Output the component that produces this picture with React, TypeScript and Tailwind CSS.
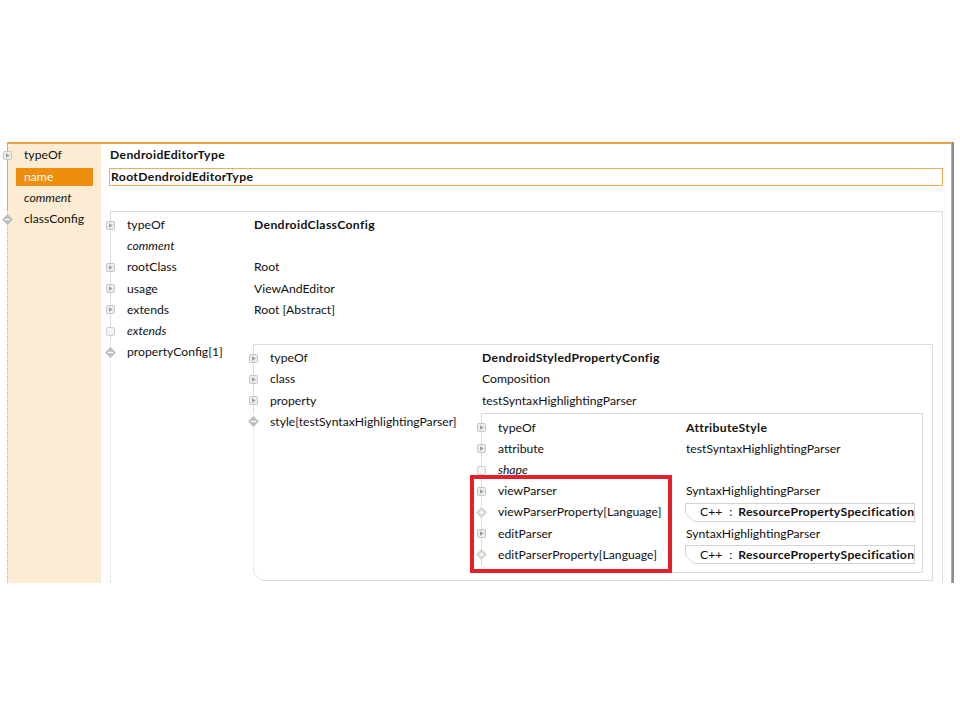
import React from 'react';

type IconKind = 'expand' | 'minus' | 'plus' | 'empty';

const ExpandIcon = () => (
  <svg width="9" height="9" viewBox="0 0 9 9">
    <rect x="0.5" y="0.5" width="8" height="8" rx="1" fill="#ececec" stroke="#c6c6c6" />
    <path d="M3 2.2 L6.6 4.5 L3 6.8 Z" fill="#9c9c9c" />
  </svg>
);

const EmptyIcon = () => (
  <svg width="9" height="9" viewBox="0 0 9 9">
    <rect x="0.5" y="0.5" width="8" height="8" rx="1.5" fill="#f4f4f4" stroke="#cfcfcf" />
  </svg>
);

const DiamondIcon = ({ plus }: { plus?: boolean }) => (
  <svg width="11" height="11" viewBox="0 0 11 11">
    <path d="M5.5 0 L11 5.5 L5.5 11 L0 5.5 Z" fill={plus ? '#d2d2d2' : '#bdbdbd'} />
    <path d="M2.8 5.5 H8.2" stroke="#f6f6f6" strokeWidth="1.4" />
    {plus && <path d="M5.5 2.8 V8.2" stroke="#f6f6f6" strokeWidth="1.4" />}
  </svg>
);

const Icon = ({ kind }: { kind: IconKind }) => {
  if (kind === 'expand') return <span className="absolute left-[-5px] top-[6px] leading-none"><ExpandIcon /></span>;
  if (kind === 'empty') return <span className="absolute left-[-5px] top-[6px] leading-none"><EmptyIcon /></span>;
  return (
    <span className="absolute left-[-6px] top-[5px] leading-none">
      <DiamondIcon plus={kind === 'plus'} />
    </span>
  );
};

interface RowProps {
  icon: IconKind;
  label: string;
  italic?: boolean;
  labelW: string;
  line: string;
  dotted?: boolean;
  labelBg?: string;
  gap?: string;
  selected?: boolean;
  children?: React.ReactNode;
}

const Row: React.FC<RowProps> = ({ icon, label, italic, labelW, line, dotted, labelBg = '', gap = '', selected, children }) => (
  <div className={`flex border-l ${dotted ? 'border-dotted' : 'border-solid'} ${line}`}>
    <div className={`relative shrink-0 ${labelW} ${labelBg}`}>
      <Icon kind={icon} />
      {selected ? (
        <div className="h-[21.2px] flex items-center pl-[8px]">
          <div className="h-[18px] w-[77px] bg-[#ef8d0e] text-white flex items-center pl-[8px]">{label}</div>
        </div>
      ) : (
        <div className={`h-[21.2px] flex items-center pl-[16px] whitespace-nowrap ${italic ? 'italic' : ''}`}>{label}</div>
      )}
    </div>
    <div className={`flex-1 min-w-0 ${gap}`}>{children}</div>
  </div>
);

const Val = ({ children, bold }: { children?: React.ReactNode; bold?: boolean }) => (
  <div className={`h-[21.2px] flex items-center pl-[1px] whitespace-nowrap ${bold ? 'font-bold tracking-[0.35px]' : ''}`}>{children}</div>
);

const SpecBox = () => (
  <div className="h-[21.2px] flex items-center">
    <div className="flex h-[19px] w-[230px]">
      <svg width="9" height="19" viewBox="0 0 9 19" className="shrink-0">
        <path d="M9 0.5 H0.5 V10 L9 18.5" fill="none" stroke="#d3d3d3" />
      </svg>
      <div className="flex-1 border-t border-r border-b border-[#d3d3d3] flex items-center pl-[6px] whitespace-nowrap">
        <span>C++</span>
        <span className="ml-[7px] mr-[6px]">:</span>
        <span className="font-bold tracking-[0.3px]">ResourcePropertySpecification</span>
      </div>
    </div>
  </div>
);

const BoxFooter = ({ h, line }: { h: string; line: string }) => (
  <div className={`flex ${h}`}>
    <svg width="9" height="8" viewBox="0 0 9 8" className="shrink-0 self-end">
      <path d="M0.5 0 L8.5 7.5 H9" fill="none" stroke="#e0e0e0" />
    </svg>
    <div className={`flex-1 border-b ${line}`} />
  </div>
);

const GRAY = 'border-[#dcdcdc]';
const ORANGE = 'border-[#f0a23a]';

export default function App() {
  return (
    <div className="relative h-[720px] w-[960px] bg-white overflow-hidden pt-[142px] text-[12.2px] text-[#111] font-['Lato',sans-serif]">
      <div className="h-[441px] overflow-hidden pl-[7px]">
        <div className="w-[945px] h-[441px] border-t-2 border-r border-[#f0a23a] shadow-[2px_0_0_#8e8e8e]">
          <div className={`h-[1px] border-l ${ORANGE} w-[94px] bg-[#fcecd3]`} />
          <Row icon="expand" label="typeOf" labelW="w-[93px]" labelBg="bg-[#fcecd3]" line={ORANGE} gap="ml-[8px] mr-[8px]">
            <Val bold>DendroidEditorType</Val>
          </Row>
          <Row icon="expand" label="name" selected labelW="w-[93px]" labelBg="bg-[#fcecd3] [&>span]:hidden" line={ORANGE} gap="ml-[8px] mr-[8px]">
            <div className="h-[21.2px] flex items-center">
              <div className="h-[18px] w-full border border-[#f3ab55] flex items-center pl-[1px] font-bold tracking-[0.35px]">RootDendroidEditorType</div>
            </div>
          </Row>
          <Row icon="empty" label="comment" italic labelW="w-[93px]" labelBg="bg-[#fcecd3] [&>span]:hidden" line={ORANGE} gap="ml-[8px] mr-[8px]" />
          <Row icon="minus" label="classConfig" dotted labelW="w-[93px]" labelBg="bg-[#fcecd3]" line={ORANGE} gap="ml-[8px] mr-[8px]">
            {/* classConfig */}
            <div className={`ml-[1px] mt-[2px] border-t border-r ${GRAY}`}>
              <div className={`h-[3px] border-l ${GRAY}`} />
              <Row icon="expand" label="typeOf" labelW="w-[142px]" line={GRAY}><Val bold>DendroidClassConfig</Val></Row>
              <Row icon="empty" label="comment" italic labelW="w-[142px] [&>span]:hidden" line={GRAY} />
              <Row icon="expand" label="rootClass" labelW="w-[142px]" line={GRAY}><Val>Root</Val></Row>
              <Row icon="expand" label="usage" labelW="w-[142px]" line={GRAY}><Val>ViewAndEditor</Val></Row>
              <Row icon="expand" label="extends" labelW="w-[142px]" line={GRAY}><Val>Root [Abstract]</Val></Row>
              <Row icon="empty" label="extends" italic labelW="w-[142px]" line={GRAY} />
              <Row icon="minus" label="propertyConfig[1]" dotted labelW="w-[142px]" line={GRAY} gap="pr-[9px]">
                {/* propertyConfig */}
                <div className={`mt-[2px] border-t border-r ${GRAY}`}>
                  <div className={`h-[3px] border-l ${GRAY}`} />
                  <Row icon="expand" label="typeOf" labelW="w-[227px]" line={GRAY}><Val bold>DendroidStyledPropertyConfig</Val></Row>
                  <Row icon="expand" label="class" labelW="w-[227px]" line={GRAY}><Val>Composition</Val></Row>
                  <Row icon="expand" label="property" labelW="w-[227px]" line={GRAY}><Val>testSyntaxHighlightingParser</Val></Row>
                  <Row icon="minus" label="style[testSyntaxHighlightingParser]" dotted labelW="w-[227px]" line={GRAY} gap="pr-[9px]">
                    {/* style */}
                    <div className={`mt-[2px] border-t border-r ${GRAY}`}>
                      <div className={`h-[3px] border-l ${GRAY}`} />
                      <Row icon="expand" label="typeOf" labelW="w-[203px]" line={GRAY}><Val bold>AttributeStyle</Val></Row>
                      <Row icon="expand" label="attribute" labelW="w-[203px]" line={GRAY}><Val>testSyntaxHighlightingParser</Val></Row>
                      <Row icon="empty" label="shape" italic labelW="w-[203px]" line={GRAY} />
                      <Row icon="expand" label="viewParser" labelW="w-[203px]" line={GRAY}><Val>SyntaxHighlightingParser</Val></Row>
                      <Row icon="plus" label="viewParserProperty[Language]" labelW="w-[203px]" line={GRAY} gap="pr-[7px]"><SpecBox /></Row>
                      <Row icon="expand" label="editParser" labelW="w-[203px]" line={GRAY}><Val>SyntaxHighlightingParser</Val></Row>
                      <Row icon="plus" label="editParserProperty[Language]" labelW="w-[203px]" line={GRAY} gap="pr-[7px]"><SpecBox /></Row>
                      <BoxFooter h="h-[7px]" line={GRAY} />
                    </div>
                  </Row>
                  <BoxFooter h="h-[8px]" line={GRAY} />
                </div>
              </Row>
              <div className={`h-[40px] border-l border-dotted ${GRAY}`} />
            </div>
          </Row>
        </div>
      </div>
      <div className="absolute left-[470px] top-[475px] w-[202px] h-[98px] border-4 border-[#e5202a]" />
    </div>
  );
}
